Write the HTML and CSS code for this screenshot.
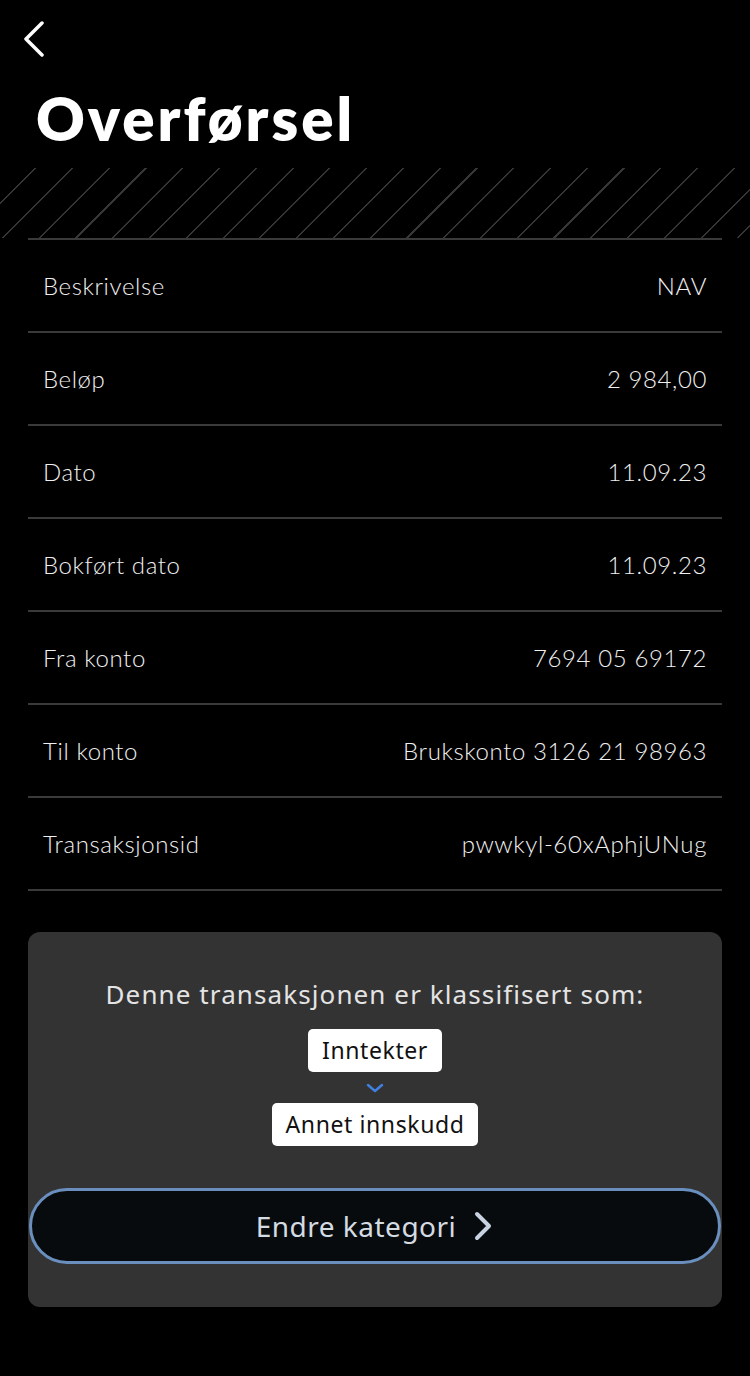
FILE: index.html
```html
<!DOCTYPE html>
<html lang="no">
<head>
  <meta charset="UTF-8" />
  <meta name="viewport" content="width=device-width, initial-scale=1.0"/>
  <title>Overførsel</title>
  <link rel="stylesheet" href="styles.css">
</head>
<body>

  <header class="top">
    <button class="back" aria-label="Tilbake">
      <svg width="24" height="36" viewBox="0 0 24 36">
        <polyline points="20,2 4,18 20,34" fill="none" stroke="#fff" stroke-width="3.5" stroke-linecap="round" stroke-linejoin="round"/>
      </svg>
    </button>
    <h1>Overførsel</h1>
  </header>

  <div class="hatch"></div>

  <ul class="details">
    <li><span>Beskrivelse</span><span>NAV</span></li>
    <li><span>Beløp</span><span>2 984,00</span></li>
    <li><span>Dato</span><span>11.09.23</span></li>
    <li><span>Bokført dato</span><span>11.09.23</span></li>
    <li><span>Fra konto</span><span>7694 05 69172</span></li>
    <li><span>Til konto</span><span>Brukskonto 3126 21 98963</span></li>
    <li><span>Transaksjonsid</span><span>pwwkyl-60xAphjUNug</span></li>
  </ul>

  <section class="category">
    <p class="category-title">Denne transaksjonen er klassifisert som:</p>
    <span class="tag">Inntekter</span>
    <svg class="arrow-down" width="18" height="10" viewBox="0 0 18 10">
      <polyline points="2,2 9,8 16,2" fill="none" stroke="#3f80e0" stroke-width="2.5" stroke-linecap="round" stroke-linejoin="round"/>
    </svg>
    <span class="tag">Annet innskudd</span>

    <button class="change">
      Endre kategori
      <svg width="22" height="30" viewBox="0 0 22 30">
        <polyline points="5,3 17,15 5,27" fill="none" stroke="#c8d2e0" stroke-width="4" stroke-linecap="round" stroke-linejoin="round"/>
      </svg>
    </button>
  </section>

</body>
</html>
```

FILE: styles.css
```css
body {
  margin: 0;
  background-color: #000;
  color: #f0f0f0;
  font-family: "Lato", "Noto Sans", sans-serif;
  min-height: 100vh;
}

.top {
  padding: 21px 0 0 22px;
}

.back {
  background: none;
  border: none;
  padding: 0;
  display: block;
  cursor: pointer;
}

h1 {
  margin: 22px 0 0 14px;
  font-size: 60px;
  line-height: 72px;
  font-weight: 800;
  color: #fff;
  letter-spacing: 3px;
}

.hatch {
  height: 70px;
  margin-top: 14px;
  background: repeating-linear-gradient(135deg, transparent 0 24.5px, #363636 24.5px 26px);
}

.details {
  list-style: none;
  margin: 0 28px;
  padding: 0;
  border-top: 2px solid #3a3a3a;
}

.details li {
  display: flex;
  justify-content: space-between;
  align-items: center;
  height: 91px;
  padding: 0 15px;
  border-bottom: 2px solid #3a3a3a;
  font-size: 24px;
  font-weight: 300;
  letter-spacing: 0.6px;
}

.category {
  margin: 41px 28px 0;
  background-color: #333;
  border-radius: 12px;
  padding: 44px 1px 43px;
  display: flex;
  flex-direction: column;
  align-items: center;
  font-family: "Noto Sans", sans-serif;
}

.category-title {
  margin: 0 0 17px;
  font-size: 26px;
  letter-spacing: 1.1px;
  color: #e4e4e4;
}

.tag {
  background-color: #fff;
  color: #111;
  border-radius: 5px;
  padding: 5px 14px 6px;
  font-size: 23px;
  letter-spacing: 0.6px;
}

.arrow-down {
  display: block;
  margin: 11px 0 10px;
}

.change {
  margin-top: 42px;
  width: 100%;
  height: 76px;
  border: 3px solid #6a8fbf;
  border-radius: 40px;
  background-color: #070b0d;
  color: #d5dbe2;
  font-family: "Noto Sans", sans-serif;
  font-size: 28px;
  letter-spacing: 0.5px;
  display: flex;
  align-items: center;
  justify-content: center;
  gap: 16px;
  cursor: pointer;
}
```
